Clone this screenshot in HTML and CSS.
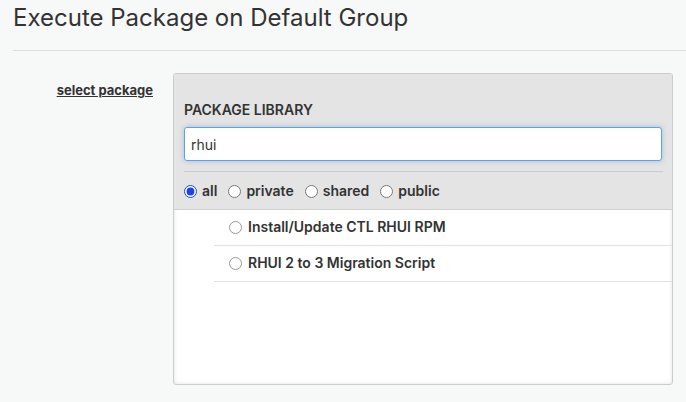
FILE: index.html
```html
<!DOCTYPE html>
<html>
<head>
<meta charset="utf-8">
<link rel="stylesheet" href="styles.css">
</head>
<body>
<div class="page">
  <h1 class="title">Execute Package on Default Group</h1>
  <div class="form-row">
    <div class="label-col"><a class="field-label" href="#">select package</a></div>
    <div class="panel">
      <div class="panel-head">
        <div class="lib-title">PACKAGE LIBRARY</div>
        <input class="search" type="text" value="rhui">
        <div class="divider"></div>
        <div class="filters">
          <label class="filter"><input type="radio" name="f" checked><span>all</span></label>
          <label class="filter"><input type="radio" name="f"><span>private</span></label>
          <label class="filter"><input type="radio" name="f"><span>shared</span></label>
          <label class="filter"><input type="radio" name="f"><span>public</span></label>
        </div>
      </div>
      <div class="panel-body">
        <ul class="pkg-list">
          <li class="pkg"><label><input type="radio" name="p"><span>Install/Update CTL RHUI RPM</span></label></li>
          <li class="pkg"><label><input type="radio" name="p"><span>RHUI 2 to 3 Migration Script</span></label></li>
        </ul>
      </div>
    </div>
  </div>
</div>
</body>
</html>
```
FILE: styles.css
```css
html, body {
  margin: 0;
  padding: 0;
  background: #f7f8f8;
  font-family: Inter, "Noto Sans", sans-serif;
  color: #333;
}
.page {
  padding: 0 0 0 13px;
}
.title {
  margin: 0;
  padding: 3px 0 17px 0;
  font-size: 24px;
  font-weight: 400;
  line-height: 30px;
  color: #333;
  border-bottom: 1px solid #ddd;
}
.form-row {
  display: flex;
  margin-top: 22px;
}
.label-col {
  width: 140px;
  text-align: right;
  padding-top: 6px;
  margin-right: 20px;
}
.field-label {
  font-size: 13px;
  font-weight: 700;
  color: #333;
  text-decoration: underline;
}
.panel {
  width: 498px;
  height: 310px;
  border: 1px solid #ccc;
  border-radius: 3px;
  background: #fff;
  box-shadow: inset 0 0 4px rgba(0,0,0,0.12);
  overflow: hidden;
  display: flex;
  flex-direction: column;
}
.panel-head {
  background: #e4e4e4;
  padding: 27px 9px 0 10px;
  border-bottom: 1px solid #d0d0d0;
}
.lib-title {
  font-size: 14px;
  font-weight: 600;
  line-height: 18px;
  color: #333;
  margin-bottom: 8px;
}
.search {
  display: block;
  box-sizing: border-box;
  width: 478px;
  height: 34px;
  margin: 0;
  padding: 0 6px;
  border: 1px solid #5ea3e6;
  border-radius: 3px;
  background: #fff;
  box-shadow: 0 0 5px rgba(80,140,210,0.45);
  font-family: Inter, "Noto Sans", sans-serif;
  font-size: 14px;
  color: #333;
  outline: none;
}
.divider {
  height: 1px;
  background: #ccc;
  margin-top: 10px;
}
.filters {
  display: flex;
  align-items: center;
  height: 37px;
}
.filter {
  display: flex;
  align-items: center;
  margin-right: 11px;
  font-size: 14px;
  font-weight: 600;
  color: #333;
}
.filter input {
  width: 13px;
  height: 13px;
  margin: 2px 5px 0 0;
  accent-color: #1a43ee;
}
.panel-body {
  flex: 1;
}
.pkg-list {
  list-style: none;
  margin: 0 0 0 40px;
  padding: 0;
}
.pkg {
  box-sizing: border-box;
  height: 36px;
  padding-bottom: 2px;
  border-bottom: 1px solid #e2e2e2;
  display: flex;
  align-items: center;
}
.pkg label {
  display: flex;
  align-items: center;
  padding-left: 15px;
  font-size: 14px;
  font-weight: 600;
  color: #333;
}
.pkg input {
  width: 13px;
  height: 13px;
  margin: 1px 6px 0 0;
  opacity: 0.75;
}
```
